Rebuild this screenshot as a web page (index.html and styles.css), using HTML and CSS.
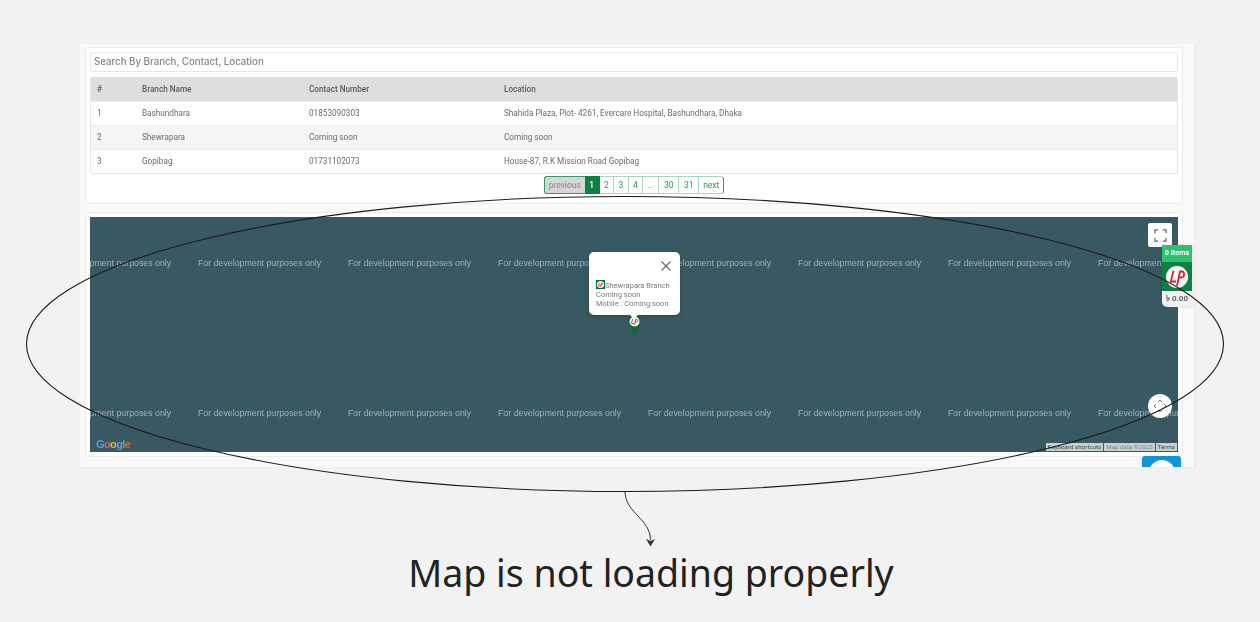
FILE: index.html
```html
<!DOCTYPE html>
<html lang="en">
<head>
<meta charset="UTF-8" />
<title>Branches</title>
<link rel="stylesheet" href="styles.css">
</head>
<body>

<div class="shot">
  <div class="card card-list">
    <input class="search" type="text" placeholder="Search By Branch, Contact, Location" />
    <table class="branches">
      <thead>
        <tr><th class="c-no">#</th><th class="c-name">Branch Name</th><th class="c-phone">Contact Number</th><th>Location</th></tr>
      </thead>
      <tbody>
        <tr><td>1</td><td>Bashundhara</td><td>01853090303</td><td>Shahida Plaza, Plot- 4261, Evercare Hospital, Bashundhara, Dhaka</td></tr>
        <tr><td>2</td><td>Shewrapara</td><td>Coming soon</td><td>Coming soon</td></tr>
        <tr><td>3</td><td>Gopibag</td><td>01731102073</td><td>House-87, R.K Mission Road Gopibag</td></tr>
      </tbody>
    </table>
    <div class="pager">
      <a class="prev">previous</a>
      <a class="on">1</a>
      <a class="p1">2</a>
      <a class="p1">3</a>
      <a class="p1">4</a>
      <a class="dots">...</a>
      <a class="p2">30</a>
      <a class="p2">31</a>
      <a class="next">next</a>
    </div>
  </div>

  <div class="card card-map">
    <div class="map">
      <div class="wm-row">
        <span>For development purposes only</span><span>For development purposes only</span><span>For development purposes only</span><span>For development purposes only</span><span>For development purposes only</span><span>For development purposes only</span><span>For development purposes only</span><span>For development purposes only</span>
      </div>
      <div class="wm-row">
        <span>For development purposes only</span><span>For development purposes only</span><span>For development purposes only</span><span>For development purposes only</span><span>For development purposes only</span><span>For development purposes only</span><span>For development purposes only</span><span>For development purposes only</span>
      </div>

      <button class="map-btn full-btn">
        <svg width="13" height="13" viewBox="0 0 14 14" fill="none" stroke="#666" stroke-width="1.3">
          <path d="M1 4.500V1h3.500M9.500 1H13v3.500M13 9.500V13H9.500M4.500 13H1V9.500" />
        </svg>
      </button>
      <button class="map-btn pan-btn">
        <svg width="14" height="14" viewBox="0 0 14 14" fill="none" stroke="#777" stroke-width="1">
          <path d="M5 3l2-2 2 2M5 11l2 2 2-2M3 5L1 7l2 2M11 5l2 2-2 2" />
        </svg>
      </button>

      <div class="pin">
        <svg width="13" height="23" viewBox="0 0 13 23">
          <path d="M6.500 23C5 17 0 13 0 6.500a6.500 6.500 0 0 1 13 0C13 13 8 17 6.500 23z" fill="#0f6b3c" />
          <circle cx="6.500" cy="7.500" r="5" fill="#fff" />
          <path d="M4.500 5l-1 4.500H6M6.500 11l1.200-5.500h1c1.500 0 1.500 2.500-.3 2.500H7" fill="none" stroke="#d8232a" stroke-width=".9" />
        </svg>
      </div>

      <div class="info">
        <svg class="info-x" width="10" height="10" viewBox="0 0 10 10" stroke="#666" stroke-width="1.100">
          <path d="M.5.5l9 9M9.500.5l-9 9" />
        </svg>
        <p class="info-name">
          <svg width="9" height="9" viewBox="0 0 9 9">
            <rect width="9" height="9" fill="#0f6b3c" />
            <circle cx="4.500" cy="4.500" r="3.600" fill="#fff" />
            <path d="M3.300 2.500l-.7 3.500h1.700M4.500 7l.8-4h.7c1 0 1 1.800-.2 1.800h-.8" fill="none" stroke="#d8232a" stroke-width=".8" />
          </svg>Shewrapara Branch
        </p>
        <p>Coming soon</p>
        <p>Mobile : Coming soon</p>
      </div>

      <div class="g-logo"><b class="g-blue">G</b><b class="g-red">o</b><b class="g-yellow">o</b><b class="g-blue">g</b><b class="g-green">l</b><b class="g-red">e</b></div>
      <div class="attrib">
        <span class="k">Keyboard shortcuts</span>
        <span class="d">Map data ©2025</span>
        <span class="t">Terms</span>
      </div>
    </div>
  </div>

  <div class="chat"><i></i></div>

  <div class="cart">
    <div class="cart-count">0 Items</div>
    <div class="cart-logo">
      <svg width="22" height="22" viewBox="0 0 22 22">
        <circle cx="11" cy="11" r="11" fill="#fff" />
        <path d="M7.500 4.500L4.800 15.500H10M11 20L14 5.500h2c3 0 3 6-1 6h-3" fill="none" stroke="#dc1f2b" stroke-width="1.800" />
      </svg>
    </div>
    <div class="cart-total">৳ 0.00</div>
  </div>
</div>

<h1 class="caption">Map is not loading properly</h1>

<!-- hand drawn annotation on top of the screenshot -->
<svg class="marks" width="1260" height="622" viewBox="0 0 1260 622" fill="none" stroke="#1c1c1c">
  <ellipse cx="625" cy="344" rx="598.500" ry="147.500" stroke-width="1.100" />
  <path d="M625 492c1 22 25 26 25.500 48" stroke="#333" />
  <path d="M646 539l4.500 2 4.500-2-4.500 7.500z" fill="#333" stroke="none" />
</svg>

</body>
</html>
```

FILE: styles.css
```css
body {
  margin: 0;
  background: #f2f2f2;
  font-family: Roboto, "Liberation Sans", sans-serif;
}
.shot {
  position: relative;
  box-sizing: border-box;
  width: 1115px;
  height: 423px;
  margin: 44px 0 0 80px;
  padding: 3px 11px 0 5px;
  background: #f9f9f9;
  border-right: 1px solid #e8e8e8;
  filter: blur(0.35px);
}
.card {
  box-sizing: border-box;
  background: #fff;
  border: 1px solid #ececec;
  border-radius: 3px;
}
.card-list {
  height: 157px;
  padding: 4px;
  margin-bottom: 8px;
}
.card-map {
  height: 245px;
  padding: 4px;
}
.search {
  display: block;
  box-sizing: border-box;
  width: 100%;
  height: 20px;
  padding: 0 3px 2px;
  margin-bottom: 5px;
  border: 1px solid #e6e6e6;
  border-radius: 3px;
  font-family: Inter, sans-serif;
  font-size: 9.700px;
  font-weight: 500;
}
.search::placeholder {
  color: #858585;
  opacity: 1;
}
.branches {
  width: 100%;
  border-collapse: separate;
  border-spacing: 0;
  border: 1px solid #e6e6e6;
  border-top: 0;
  border-radius: 3px;
  font-size: 8.200px;
  color: #6c6c6c;
  table-layout: fixed;
}
.branches th,
.branches td {
  height: 24px;
  padding: 0 6px;
  text-align: left;
  box-sizing: border-box;
}
.branches th {
  background: #dedede;
  color: #5c5c5c;
  font-weight: 500;
}
.branches td {
  padding-bottom: 2px;
  border-top: 1px solid #ececec;
}
.branches tbody tr:nth-child(2) td {
  background: #f5f5f5;
}
.c-no { width: 45px; }
.c-name { width: 167px; }
.c-phone { width: 195px; }
.pager {
  display: flex;
  justify-content: center;
  margin-top: 2px;
  font-size: 8.500px;
}
.pager a {
  display: flex;
  align-items: center;
  justify-content: center;
  box-sizing: border-box;
  height: 18px;
  border: 1px solid #a9d8bc;
  border-width: 1px 1px 1px 0;
  color: #2f9461;
  background: #fff;
}
.pager .prev {
  width: 41px;
  background: #d6d6d6;
  color: #888;
  border: 1px solid #2e9e64;
  border-right: 0;
  border-radius: 3px 0 0 3px;
}
.pager .on {
  width: 15px;
  background: #0f8043;
  border-color: #0f8043;
  color: #fff;
  font-weight: 500;
}
.pager .p1 { width: 14.500px; }
.pager .dots { width: 16px; color: #888; }
.pager .p2 { width: 20px; }
.pager .next {
  width: 25px;
  border-right: 1px solid #2e9e64;
  border-radius: 0 3px 3px 0;
}
.map {
  position: relative;
  height: 235px;
  overflow: hidden;
  background: #395962;
  display: flex;
  flex-direction: column;
  gap: 138px;
  padding-top: 40px;
  box-sizing: border-box;
}
.wm-row {
  display: flex;
  margin-left: -42px;
  height: 12px;
  line-height: 12px;
  font-family: "Liberation Sans", sans-serif;
  font-size: 8.800px;
  color: #a0b1b6;
  white-space: nowrap;
}
.wm-row span {
  flex: none;
  width: 150px;
}
.map-btn {
  position: absolute;
  display: flex;
  align-items: center;
  justify-content: center;
  padding: 0;
  border: 0;
  background: #fff;
}
.full-btn {
  top: 6px;
  right: 6px;
  width: 24px;
  height: 24px;
  border-radius: 2px;
}
.pan-btn {
  top: 177px;
  right: 6px;
  width: 24px;
  height: 24px;
  border-radius: 50%;
}
.pin {
  position: absolute;
  left: 537.500px;
  top: 97px;
  line-height: 0;
}
.info {
  position: absolute;
  left: 499px;
  top: 35px;
  box-sizing: border-box;
  width: 91px;
  height: 63px;
  padding: 28px 7px 0;
  background: #fff;
  border-radius: 5px;
  box-shadow: 0 1px 4px rgba(0, 0, 0, 0.25);
  font-size: 7.500px;
  line-height: 9px;
  color: #7a7a7a;
}
.info::after {
  content: "";
  position: absolute;
  left: 41px;
  bottom: -4px;
  border: 4px solid transparent;
  border-top-color: #fff;
  border-bottom: 0;
}
.info p {
  margin: 0;
  white-space: nowrap;
}
.info-name svg {
  vertical-align: -1px;
}
.info-x {
  position: absolute;
  top: 9px;
  right: 9px;
}
.g-logo {
  position: absolute;
  left: 6px;
  bottom: 1px;
  font-family: "Liberation Sans", sans-serif;
  font-size: 11px;
  line-height: 14px;
  letter-spacing: -0.600px;
}
.g-blue { color: #6a97dd; }
.g-red { color: #d2655b; }
.g-yellow { color: #d9bb4e; }
.g-green { color: #62a878; }
.attrib {
  position: absolute;
  right: 1px;
  bottom: 1px;
  display: flex;
  gap: 1px;
  height: 8px;
  line-height: 8px;
  font-size: 6.200px;
  color: #444;
  white-space: nowrap;
}
.attrib span {
  background: #c6d0d2;
  padding: 0 2px;
}
.attrib .d { color: #7c8689; }
.chat {
  position: absolute;
  left: 1062px;
  top: 412px;
  width: 39px;
  height: 11px;
  background: #0e96d8;
  border-radius: 3px 3px 0 0;
  overflow: hidden;
}
.chat i {
  display: block;
  width: 26px;
  height: 26px;
  margin: 4px auto 0;
  border-radius: 50%;
  background: #fff;
}
.cart {
  position: absolute;
  left: 1082px;
  top: 201px;
  width: 30px;
  border-radius: 0 0 0 5px;
  overflow: hidden;
  box-shadow: 0 0 2px rgba(0, 0, 0, 0.2);
}
.cart-count {
  height: 17px;
  line-height: 16px;
  background: #2dc26e;
  color: #fff;
  font-size: 7.300px;
  font-weight: 700;
  text-align: center;
  white-space: nowrap;
}
.cart-logo {
  display: flex;
  align-items: center;
  justify-content: center;
  height: 29px;
  background: #0f8043;
}
.cart-total {
  height: 16px;
  line-height: 15px;
  background: #f1f1f1;
  color: #666;
  font-size: 8px;
  font-weight: 700;
  text-align: center;
  white-space: nowrap;
}
.caption {
  margin: 0;
  padding: 81px 0 0 42px;
  text-align: center;
  font-family: "Noto Sans", sans-serif;
  font-size: 37.500px;
  line-height: 50px;
  font-weight: 400;
  color: #222;
}
.marks {
  position: absolute;
  left: 0;
  top: 0;
  pointer-events: none;
}
```
